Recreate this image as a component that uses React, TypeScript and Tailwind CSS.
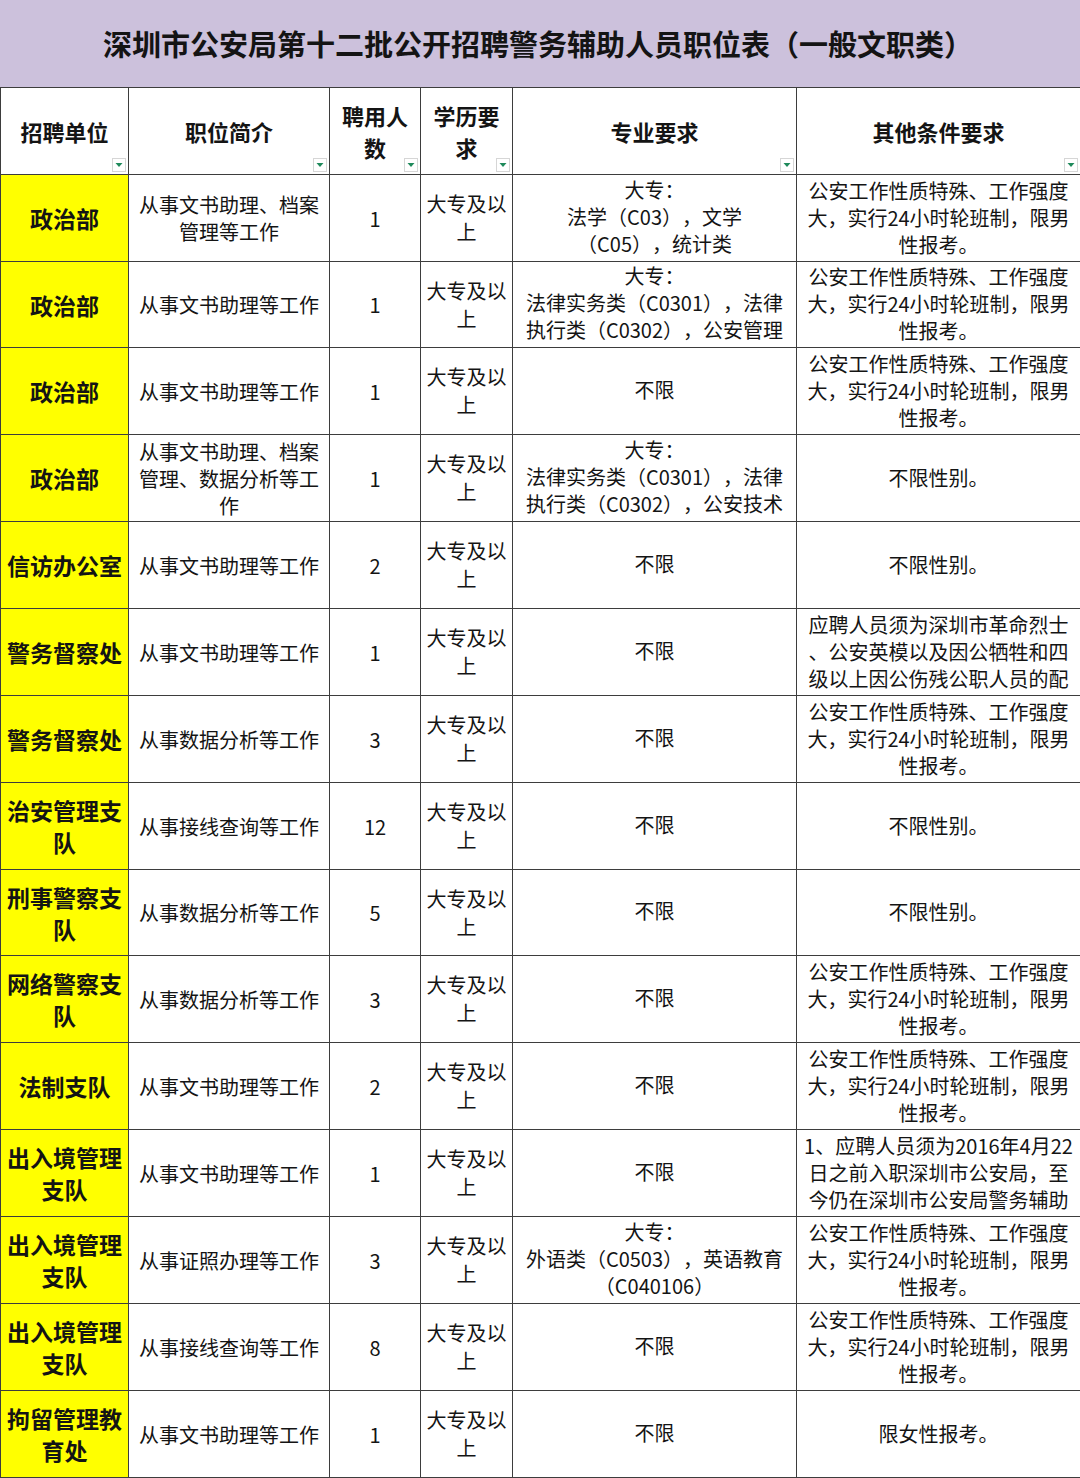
const COND_A = ["公安工作性质特殊、工作强度", "大，实行24小时轮班制，限男", "性报考。"];
const NOT_GENDER = ["不限性别。"];
const EDU = ["大专及以", "上"];

type Row = {
  unit: string[];
  duty: string[];
  count: string;
  major: string[];
  other: string[];
};

const rows: Row[] = [
  { unit: ["政治部"], duty: ["从事文书助理、档案", "管理等工作"], count: "1", major: ["大专：", "法学（C03），文学", "（C05），统计类"], other: COND_A },
  { unit: ["政治部"], duty: ["从事文书助理等工作"], count: "1", major: ["大专：", "法律实务类（C0301），法律", "执行类（C0302），公安管理"], other: COND_A },
  { unit: ["政治部"], duty: ["从事文书助理等工作"], count: "1", major: ["不限"], other: COND_A },
  { unit: ["政治部"], duty: ["从事文书助理、档案", "管理、数据分析等工", "作"], count: "1", major: ["大专：", "法律实务类（C0301），法律", "执行类（C0302），公安技术"], other: NOT_GENDER },
  { unit: ["信访办公室"], duty: ["从事文书助理等工作"], count: "2", major: ["不限"], other: NOT_GENDER },
  { unit: ["警务督察处"], duty: ["从事文书助理等工作"], count: "1", major: ["不限"], other: ["应聘人员须为深圳市革命烈士", "、公安英模以及因公牺牲和四", "级以上因公伤残公职人员的配"] },
  { unit: ["警务督察处"], duty: ["从事数据分析等工作"], count: "3", major: ["不限"], other: COND_A },
  { unit: ["治安管理支", "队"], duty: ["从事接线查询等工作"], count: "12", major: ["不限"], other: NOT_GENDER },
  { unit: ["刑事警察支", "队"], duty: ["从事数据分析等工作"], count: "5", major: ["不限"], other: NOT_GENDER },
  { unit: ["网络警察支", "队"], duty: ["从事数据分析等工作"], count: "3", major: ["不限"], other: COND_A },
  { unit: ["法制支队"], duty: ["从事文书助理等工作"], count: "2", major: ["不限"], other: COND_A },
  { unit: ["出入境管理", "支队"], duty: ["从事文书助理等工作"], count: "1", major: ["不限"], other: ["1、应聘人员须为2016年4月22", "日之前入职深圳市公安局，至", "今仍在深圳市公安局警务辅助"] },
  { unit: ["出入境管理", "支队"], duty: ["从事证照办理等工作"], count: "3", major: ["大专：", "外语类（C0503），英语教育", "（C040106）"], other: COND_A },
  { unit: ["出入境管理", "支队"], duty: ["从事接线查询等工作"], count: "8", major: ["不限"], other: COND_A },
  { unit: ["拘留管理教", "育处"], duty: ["从事文书助理等工作"], count: "1", major: ["不限"], other: ["限女性报考。"] },
];

const headers = [["招聘单位"], ["职位简介"], ["聘用人", "数"], ["学历要", "求"], ["专业要求"], ["其他条件要求"]];

function Lines({ lines }: { lines: string[] }) {
  return (
    <div className="flex flex-col items-center">
      {lines.map((l, i) => (
        <span key={i} className="whitespace-nowrap">
          {l}
        </span>
      ))}
    </div>
  );
}

function FilterButton() {
  return (
    <span className="absolute bottom-[2px] right-[2px] flex size-[14px] items-center justify-center border border-[#d6d6d6] bg-white">
      <svg width="8" height="6" viewBox="0 0 8 6">
        <path d="M0.5 1 L7.5 1 L4 5 Z" fill="#1f8a5b" />
      </svg>
    </span>
  );
}

export default function App() {
  return (
    <div className="w-[1080px] bg-white font-['Noto_Sans_CJK_SC',sans-serif] text-[#141414] [text-spacing-trim:space-all]">
      <div className="flex h-[87px] items-center justify-center bg-[#ccc1dc] pr-[4px] text-[29px] font-bold leading-none">
        深圳市公安局第十二批公开招聘警务辅助人员职位表（一般文职类）
      </div>

      <div className="grid grid-cols-[128px_201px_91px_92px_284px_284px] border-l border-t border-[#3d3d3d]">
        {headers.map((h, i) => (
          <div
            key={i}
            className="relative flex h-[87px] items-center justify-center border-b border-r border-[#3d3d3d] text-[22px] font-bold leading-[32px]"
          >
            <Lines lines={h} />
            <FilterButton />
          </div>
        ))}

        {rows.map((r, i) => {
          const h = i === 1 || i === 8 ? "h-[86px]" : "h-[87px]";
          return [
            <div
              key={`${i}-u`}
              className={`${h} flex items-center justify-center overflow-hidden border-b border-r border-[#3d3d3d] bg-[#ffff00] text-[23px] font-bold leading-[32px]`}
            >
              <Lines lines={r.unit} />
            </div>,
            <div
              key={`${i}-d`}
              className={`${h} flex items-center justify-center overflow-hidden border-b border-r border-[#3d3d3d] text-[20px] leading-[27px]`}
            >
              <Lines lines={r.duty} />
            </div>,
            <div
              key={`${i}-c`}
              className={`${h} flex items-center justify-center overflow-hidden border-b border-r border-[#3d3d3d] text-[20px] leading-[27px]`}
            >
              {r.count}
            </div>,
            <div
              key={`${i}-e`}
              className={`${h} flex items-center justify-center overflow-hidden border-b border-r border-[#3d3d3d] text-[20px] leading-[28px]`}
            >
              <Lines lines={EDU} />
            </div>,
            <div
              key={`${i}-m`}
              className={`${h} flex items-center justify-center overflow-hidden border-b border-r border-[#3d3d3d] pb-[4px] text-[20px] leading-[27px]`}
            >
              <Lines lines={r.major} />
            </div>,
            <div
              key={`${i}-o`}
              className={`${h} flex items-center justify-center overflow-hidden border-b border-r border-[#3d3d3d] pb-[2px] text-[20px] leading-[27px]`}
            >
              <Lines lines={r.other} />
            </div>,
          ];
        })}
      </div>
    </div>
  );
}
